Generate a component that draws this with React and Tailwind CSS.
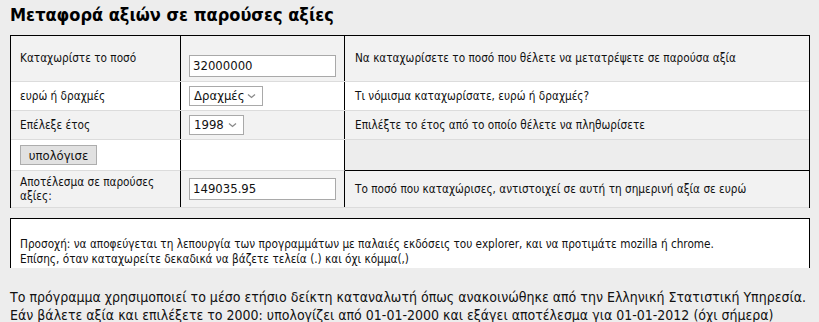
import React from "react";

const F = { fontFamily: '"DejaVu Sans Condensed", "DejaVu Sans", sans-serif' };

function Chevron() {
  return (
    <svg width="9" height="6" viewBox="0 0 9 6" className="shrink-0">
      <path d="M1 1.5 L4.5 4.5 L8 1.5" fill="none" stroke="#8a8a8a" strokeWidth="1.3" />
    </svg>
  );
}

function Select({ value, w }) {
  return (
    <div className={`flex h-[20px] items-center justify-between border border-[#a9a9a9] bg-white pl-[4px] pr-[6px] text-[13px] ${w}`}>
      <span>{value}</span>
      <Chevron />
    </div>
  );
}

function Input({ value }) {
  return (
    <div className="flex h-[22px] w-[147px] items-center border border-[#a9a9a9] bg-white pl-[3px] text-[13px]">
      {value}
    </div>
  );
}

export default function App() {
  return (
    <div className="min-h-[322px] w-[819px] bg-[#ededed] text-[11.7px] leading-[14px] text-[#111]" style={F}>
      <h1 className="pl-[10px] pt-[3px] text-[18px] font-bold leading-[24px] text-black">
        Μεταφορά αξιών σε παρούσες αξίες
      </h1>
      <div className="ml-[10px] mt-[8px] w-[800px] border-x border-t border-black">
        <div className="grid h-[46px] grid-cols-[170px_164px_464px] border-b border-[#dcdcdc] bg-[#f2f2f2]">
          <div className="flex items-center border-r border-black pl-[9px] pb-[2px]">Καταχωρίστε το ποσό</div>
          <div className="flex items-end border-r border-black pl-[8px] pb-[4px]">
            <Input value="32000000" />
          </div>
          <div className="flex items-center pl-[10px] pb-[2px]">
            Να καταχωρίσετε το ποσό που θέλετε να μετατρέψετε σε παρούσα αξία
          </div>
        </div>
        <div className="grid h-[29px] grid-cols-[170px_164px_464px] border-b border-[#dcdcdc] bg-white">
          <div className="flex items-center border-r border-black pl-[9px] pb-[1px]">ευρώ ή δραχμές</div>
          <div className="flex items-center border-r border-black pl-[8px]">
            <Select value="Δραχμές" w="w-[74px]" />
          </div>
          <div className="flex items-center pl-[10px] pb-[1px]">Τι νόμισμα καταχωρίσατε, ευρώ ή δραχμές?</div>
        </div>
        <div className="grid h-[29px] grid-cols-[170px_164px_464px] border-b border-[#dcdcdc] bg-[#f2f2f2]">
          <div className="flex items-center border-r border-black pl-[9px]">Επέλεξε έτος</div>
          <div className="flex items-center border-r border-black pl-[8px]">
            <Select value="1998" w="w-[55px]" />
          </div>
          <div className="flex items-center pl-[10px]">Επιλέξτε το έτος από το οποίο θέλετε να πληθωρίσετε</div>
        </div>
        <div className="grid h-[31px] grid-cols-[170px_164px_464px] bg-white">
          <div className="flex items-center border-b border-r border-[#dcdcdc] border-r-black pl-[9px]">
            <button className="flex h-[20px] w-[77px] items-center justify-center border border-[#adadad] bg-[#e1e1e1] text-[13px] leading-none">
              υπολόγισε
            </button>
          </div>
          <div className="border-b border-r border-[#dcdcdc] border-r-black"></div>
          <div className="border-b border-black bg-[#ededed]"></div>
        </div>
        <div className="grid h-[37px] grid-cols-[170px_164px_464px] border-b border-[#dcdcdc] bg-[#f2f2f2]">
          <div className="flex items-center border-r border-black pl-[9px] pr-[10px]">
            Αποτέλεσμα σε παρούσες αξίες:
          </div>
          <div className="flex items-center border-r border-black pl-[8px]">
            <Input value="149035.95" />
          </div>
          <div className="flex items-center pl-[10px]">
            Το ποσό που καταχώρισες, αντιστοιχεί σε αυτή τη σημερινή αξία σε ευρώ
          </div>
        </div>
      </div>
      <div className="ml-[10px] mt-[10px] h-[50px] w-[800px] border-x border-t border-black bg-white pl-[9px] pt-[18px] leading-[15px]">
        <div>Προσοχή: να αποφεύγεται τη λεπουργία των προγραμμάτων με παλαιές εκδόσεις του explorer, και να προτιμάτε mozilla ή chrome.</div>
        <div>Επίσης, όταν καταχωρείτε δεκαδικά να βάζετε τελεία (.) και όχι κόμμα(,)</div>
      </div>
      <div className="pl-[10px] pt-[20px] text-[14px] leading-[18px]">
        <div>Το πρόγραμμα χρησιμοποιεί το μέσο ετήσιο δείκτη καταναλωτή όπως ανακοινώθηκε από την Ελληνική Στατιστική Υπηρεσία.</div>
        <div>Εάν βάλετε αξία και επιλέξετε το 2000: υπολογίζει από 01-01-2000 και εξάγει αποτέλεσμα για 01-01-2012 (όχι σήμερα)</div>
      </div>
    </div>
  );
}
